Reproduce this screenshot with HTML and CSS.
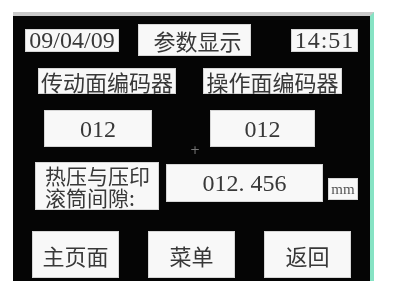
FILE: index.html
```html
<!DOCTYPE html>
<html lang="zh">
<head>
<meta charset="utf-8">
<title>参数显示</title>
<link rel="stylesheet" href="styles.css">
</head>
<body>
<div class="screen">
  <div class="row row-head">
    <div class="box date">09/04/09</div>
    <div class="box title">参数显示</div>
    <div class="box time">14:51</div>
  </div>
  <div class="row row-labels">
    <div class="box enc enc-a">传动面编码器</div>
    <div class="box enc enc-b">操作面编码器</div>
  </div>
  <div class="row row-values">
    <div class="box val val-a">012</div>
    <div class="box val val-b">012</div>
  </div>
  <div class="row row-gap">
    <div class="box gap-label"><span class="line">热压与压印</span><span class="line">滚筒间隙:</span></div>
    <div class="box gap-value">012<span class="dot">.</span>456</div>
    <div class="box unit">mm</div>
  </div>
  <div class="row row-buttons">
    <div class="box btn btn-a">主页面</div>
    <div class="box btn btn-b">菜单</div>
    <div class="box btn btn-c">返回</div>
  </div>
  <span class="cursor">+</span>
</div>
</body>
</html>
```

FILE: styles.css
```css
html, body {
  margin: 0;
  padding: 0;
  background: #ffffff;
}

body {
  width: 406px;
  height: 300px;
  overflow: hidden;
  font-family: "Liberation Serif", "Noto Sans CJK SC", serif;
  color: #383838;
}

.screen {
  position: relative;
  box-sizing: border-box;
  margin: 12px 0 0 13px;
  width: 361px;
  height: 269px;
  background: #050505;
  border-top: 4px solid #c9c9c9;
  border-right: 4px solid #86e3c4;
  filter: blur(0.35px);
}

.row {
  display: flex;
  align-items: center;
}

.box {
  box-sizing: border-box;
  display: flex;
  align-items: center;
  justify-content: center;
  background: #f8f8f8;
  border: 1px solid #d6d6d6;
  font-size: 21px;
  line-height: 1;
  white-space: nowrap;
}

/* row 1 */
.row-head {
  margin-top: 8px;
  height: 32px;
}
.date {
  margin-left: 12px;
  width: 94px;
  height: 23px;
  font-size: 24px;
}
.title {
  margin-left: 19px;
  width: 113px;
  height: 32px;
  font-family: "Noto Sans CJK SC", sans-serif;
  font-size: 22px;
  padding-left: 6px;
}
.time {
  margin-left: 40px;
  width: 67px;
  height: 23px;
  font-size: 24px;
  letter-spacing: 1px;
}

/* row 2 */
.row-labels {
  margin-top: 12px;
  height: 26px;
}
.enc {
  height: 26px;
  font-family: "Noto Sans CJK SC", sans-serif;
  font-size: 22px;
}
.enc-a {
  margin-left: 25px;
  width: 138px;
}
.enc-b {
  margin-left: 27px;
  width: 139px;
}

/* row 3 */
.row-values {
  margin-top: 16px;
  height: 37px;
}
.val {
  height: 37px;
  font-size: 24px;
}
.val-a {
  margin-left: 31px;
  width: 108px;
}
.val-b {
  margin-left: 58px;
  width: 105px;
}

/* row 4 */
.row-gap {
  margin-top: 15px;
  height: 48px;
  align-items: flex-start;
}
.gap-label {
  margin-left: 22px;
  width: 124px;
  height: 48px;
  flex-direction: column;
  align-items: flex-start;
  justify-content: center;
  padding-left: 9px;
  font-family: "Noto Sans CJK SC", sans-serif;
  font-size: 21px;
}
.line {
  display: block;
  height: 22px;
  line-height: 22px;
}
.gap-value {
  margin-left: 7px;
  margin-top: 2px;
  width: 157px;
  height: 38px;
  font-size: 24px;
}
.dot {
  margin-right: 6px;
}
.unit {
  margin-left: 5px;
  margin-top: 16px;
  width: 30px;
  height: 22px;
  font-size: 15px;
  color: #555;
}

/* row 5 */
.row-buttons {
  margin-top: 21px;
  height: 47px;
}
.btn {
  width: 87px;
  height: 47px;
  font-family: "Noto Sans CJK SC", sans-serif;
  font-size: 22px;
}
.btn-a {
  margin-left: 19px;
}
.btn-b {
  margin-left: 29px;
}
.btn-c {
  margin-left: 29px;
}

.cursor {
  position: absolute;
  left: 177px;
  top: 128px;
  color: #777;
  font-family: "DejaVu Sans", sans-serif;
  font-size: 12px;
  line-height: 12px;
}
```
